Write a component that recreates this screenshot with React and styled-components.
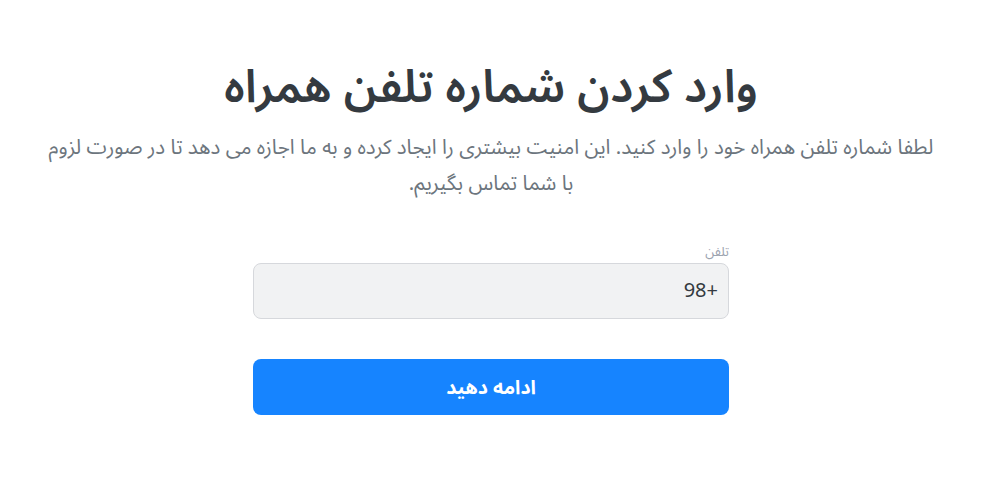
import React, { useState } from "react";
import styled, { createGlobalStyle } from "styled-components";

const GlobalStyle = createGlobalStyle`
  body {
    margin: 0;
    background: #fff;
    font-family: "Noto Sans Arabic", "Noto Sans", sans-serif;
  }
`;

const Page = styled.div`
  direction: rtl;
  display: flex;
  flex-direction: column;
  align-items: center;
  padding: 53px 40px 0 30px;
`;

const Title = styled.h1`
  margin: 0;
  color: #343a40;
  font-size: 46px;
  font-weight: 600;
  line-height: 70px;
  text-align: center;
`;

const Subtitle = styled.p`
  margin: 7px 0 0;
  max-width: 900px;
  color: #6c757d;
  font-size: 20.5px;
  line-height: 36px;
  text-align: center;
`;

const Form = styled.form`
  width: 476px;
  margin-top: 42px;
  display: flex;
  flex-direction: column;
`;

const Label = styled.label`
  color: #9ca3af;
  font-size: 13px;
  line-height: 16px;
  margin-bottom: 3px;
`;

const Input = styled.input`
  height: 56px;
  box-sizing: border-box;
  padding: 0 10px;
  border: 1px solid #d6d8dc;
  border-radius: 8px;
  background: #f1f2f3;
  color: #343a40;
  font-family: inherit;
  font-size: 20px;
  direction: rtl;
  outline: none;
`;

const Submit = styled.button`
  margin-top: 40px;
  height: 56px;
  border: none;
  border-radius: 8px;
  background: #1684ff;
  color: #fff;
  font-family: inherit;
  font-size: 19.5px;
  font-weight: bold;
  cursor: pointer;
`;

const App = () => {
  const [phone, setPhone] = useState("+98");

  return (
    <>
      <GlobalStyle />
      <Page>
        <Title>وارد کردن شماره تلفن همراه</Title>
        <Subtitle>
          لطفا شماره تلفن همراه خود را وارد کنید. این امنیت بیشتری را ایجاد کرده و به ما اجازه می دهد تا در صورت لزوم با شما تماس بگیریم.
        </Subtitle>
        <Form onSubmit={(e) => e.preventDefault()}>
          <Label>تلفن</Label>
          <Input value={phone} onChange={(e) => setPhone(e.target.value)} />
          <Submit type="submit">ادامه دهید</Submit>
        </Form>
      </Page>
    </>
  );
};

export default App;
